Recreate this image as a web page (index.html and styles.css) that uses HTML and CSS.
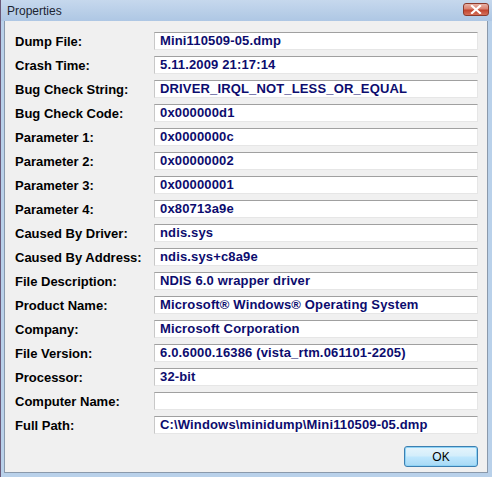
FILE: index.html
```html
<!DOCTYPE html>
<html>
<head>
<meta charset="utf-8">
<link rel="stylesheet" href="styles.css">
</head>
<body>
<div class="window">
  <div class="titlebar">
    <span class="title">Properties</span>
    <span class="close">
      <svg width="14" height="9" viewBox="0 0 14 9"><path d="M3 1 L11 8 M11 1 L3 8" stroke="#fff" stroke-width="2.2" stroke-linecap="square"/></svg>
    </span>
  </div>
  <div class="client">
    <div class="rows">
      <div class="row"><span class="label">Dump File:</span><span class="value">Mini110509-05.dmp</span></div>
      <div class="row"><span class="label">Crash Time:</span><span class="value">5.11.2009 21:17:14</span></div>
      <div class="row"><span class="label">Bug Check String:</span><span class="value">DRIVER_IRQL_NOT_LESS_OR_EQUAL</span></div>
      <div class="row"><span class="label">Bug Check Code:</span><span class="value">0x000000d1</span></div>
      <div class="row"><span class="label">Parameter 1:</span><span class="value">0x0000000c</span></div>
      <div class="row"><span class="label">Parameter 2:</span><span class="value">0x00000002</span></div>
      <div class="row"><span class="label">Parameter 3:</span><span class="value">0x00000001</span></div>
      <div class="row"><span class="label">Parameter 4:</span><span class="value">0x80713a9e</span></div>
      <div class="row"><span class="label">Caused By Driver:</span><span class="value">ndis.sys</span></div>
      <div class="row"><span class="label">Caused By Address:</span><span class="value">ndis.sys+c8a9e</span></div>
      <div class="row"><span class="label">File Description:</span><span class="value">NDIS 6.0 wrapper driver</span></div>
      <div class="row"><span class="label">Product Name:</span><span class="value">Microsoft® Windows® Operating System</span></div>
      <div class="row"><span class="label">Company:</span><span class="value">Microsoft Corporation</span></div>
      <div class="row"><span class="label">File Version:</span><span class="value">6.0.6000.16386 (vista_rtm.061101-2205)</span></div>
      <div class="row"><span class="label">Processor:</span><span class="value">32-bit</span></div>
      <div class="row"><span class="label">Computer Name:</span><span class="value"></span></div>
      <div class="row"><span class="label">Full Path:</span><span class="value">C:\Windows\minidump\Mini110509-05.dmp</span></div>
    </div>
    <div class="footer">
      <button class="ok">OK</button>
    </div>
  </div>
</div>
</body>
</html>
```
FILE: styles.css
```css
html, body {
  margin: 0;
  padding: 0;
  background: #a9c3e2;
}
.window {
  width: 492px;
  height: 477px;
  box-sizing: border-box;
  background: #b9d1ea;
  border-left: 1px solid #6b5a7a;
  display: flex;
  flex-direction: column;
  overflow: hidden;
}
.titlebar {
  height: 21px;
  flex: none;
  display: flex;
  align-items: center;
  justify-content: space-between;
  padding: 0 3px 0 6px;
  background: linear-gradient(#c6d8ed, #aec7e4);
  font-family: "Liberation Sans", Arial, sans-serif;
  font-size: 12px;
  color: #1b2431;
}
.close {
  width: 26px;
  height: 13px;
  box-sizing: border-box;
  border: 1px solid #8c3a2c;
  border-radius: 3px;
  background: linear-gradient(#e8b2a6 0%, #d9806f 45%, #c2432d 55%, #d4705a 100%);
  display: flex;
  align-items: center;
  justify-content: center;
  margin-top: -2px;
}
.client {
  flex: 1;
  margin: 0 4px 4px 3px;
  background: #f0f0f0;
  border-left: 1px solid #8a99ab;
  border-right: 1px solid #8a99ab;
  border-bottom: 1px solid #8a99ab;
  padding: 11px 9px 0 10px;
  display: flex;
  flex-direction: column;
}
.rows {
  display: flex;
  flex-direction: column;
  gap: 6px;
}
.row {
  display: flex;
  align-items: center;
  height: 18px;
}
.label {
  width: 139px;
  flex: none;
  font-family: "Liberation Sans", Arial, sans-serif;
  font-weight: bold;
  font-size: 13px;
  color: #000;
}
.value {
  flex: 1;
  height: 18px;
  box-sizing: border-box;
  background: #fff;
  border-top: 1px solid #a0a0a0;
  border-left: 1px solid #c8c8c8;
  border-right: 1px solid #e6e6e6;
  border-bottom: 1px solid #e6e6e6;
  padding-left: 5px;
  font-family: "Liberation Sans", Arial, sans-serif;
  font-weight: bold;
  font-size: 13px;
  letter-spacing: 0.15px;
  line-height: 16px;
  color: #0c0c6e;
  white-space: nowrap;
  overflow: hidden;
}
.footer {
  display: flex;
  justify-content: flex-end;
  padding-top: 12px;
}
.ok {
  width: 74px;
  height: 21px;
  box-sizing: border-box;
  border: 1px solid #3c7fb1;
  border-radius: 3px;
  background: linear-gradient(#e5f4fc 0%, #d4eefb 45%, #bde6fd 55%, #a7d9f5 100%);
  box-shadow: inset 0 0 0 1px #8fd3f5;
  font-family: "Liberation Sans", Arial, sans-serif;
  font-size: 12px;
  color: #000;
  padding: 0;
}
```
